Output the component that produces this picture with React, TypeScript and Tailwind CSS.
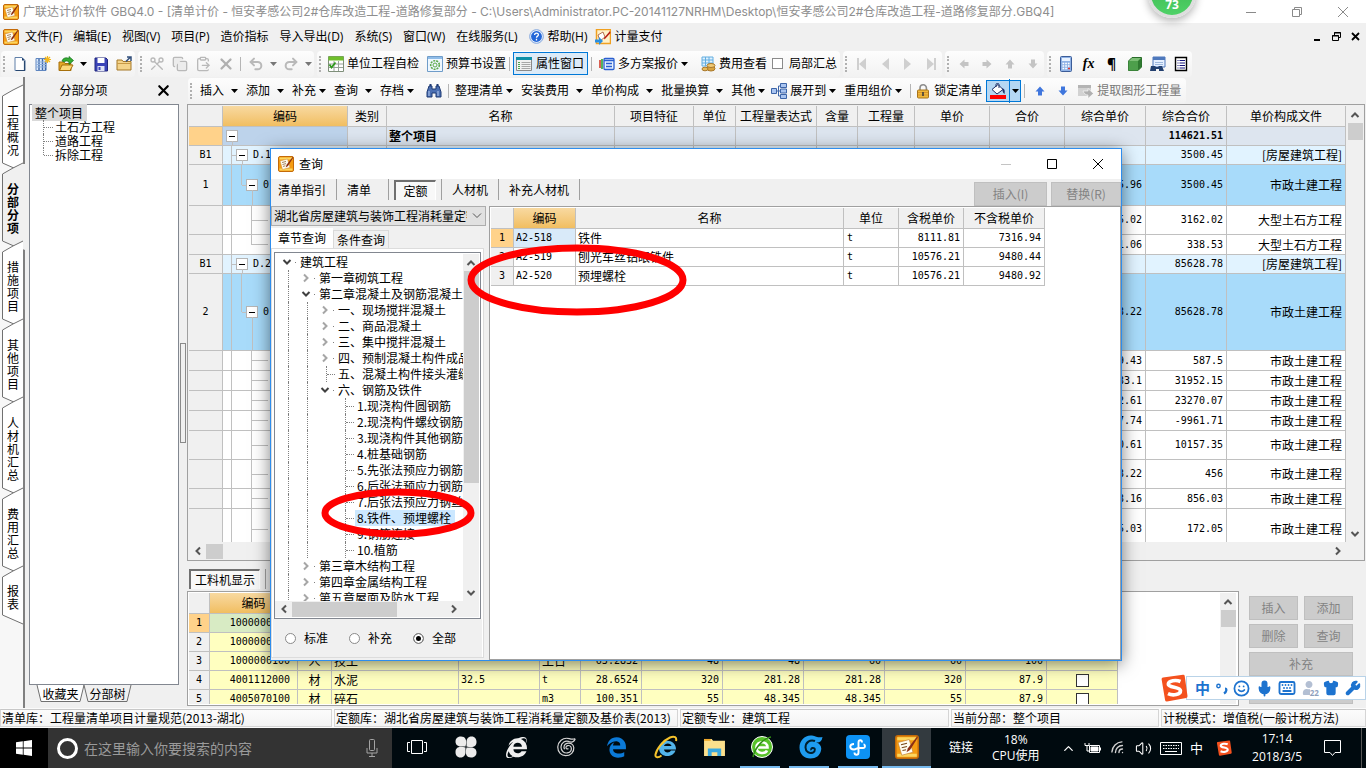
import { type ReactNode } from 'react';
import clsx from 'clsx';
import {
    ChevronUp, ClipboardPaste, Copy, Keyboard, Mic, Scissors, Shirt, Smile, Undo2, Redo2, Volume2, Wifi, Wrench, X,
} from 'lucide-react';
import { FaEdgeLegacy, FaInternetExplorer, FaUser } from 'react-icons/fa';

const UI_FONT = "font-['Open_Sans','Noto_Sans_CJK_SC',sans-serif]";
const TITLE_FONT = "font-['Inter','Noto_Sans_CJK_SC',sans-serif]";
const GRID_FONT = "font-['Noto_Sans_CJK_SC',sans-serif]";
const NUM_FONT = "font-['DejaVu_Sans_Mono',monospace] text-[10px]";

/* ---------- small drawings ---------- */

function AppIcon({ className = 'size-4' }: { className?: string }) {
    return (
        <svg viewBox="0 0 16 16" className={clsx('shrink-0', className)}>
            <rect x="0.5" y="0.5" width="15" height="15" rx="1.500" fill="#f59c12" stroke="#c46a08" />
            <path d="M1.500 1.500h13v2h-13zM1.500 12.500h13v2h-13z" fill="#fcd660" />
            <path d="M2 5 9.500 3l2.500 8.500L4.500 13.500z" fill="#fffdf2" stroke="#c98a3a" strokeWidth="0.500" />
            <path d="m4 6.500 4-1M4.500 8.500l3.500-.9M5 10.400l2.400-.6" stroke="#7a4a1c" strokeWidth="0.700" />
            <path d="m14.800.8-6.200 8-.9 2.700 2.300-1.500 5.200-8.200z" fill="#8c2f14" />
        </svg>
    );
}

function Caret({ className }: { className?: string }) {
    return (
        <svg viewBox="0 0 7 4" className={clsx('h-1 w-[7px] shrink-0', className)}>
            <path d="M0 0h7L3.500 4z" fill="currentColor" />
        </svg>
    );
}

function Arrow({ dir, className }: { dir: 'up' | 'down' | 'left' | 'right'; className?: string }) {
    const turn = { up: 0, right: 90, down: 180, left: 270 }[dir];
    return (
        <svg viewBox="0 0 10 10" className={clsx('size-[10px] shrink-0', className)}>
            <path d="M0.500 5.500 5 .5l4.500 5H7v4H3v-4z" fill="currentColor" transform={`rotate(${turn} 5 5)`} />
        </svg>
    );
}

function Chev({ dir, className = 'text-[#555]' }: { dir: 'up' | 'down' | 'left' | 'right'; className?: string }) {
    const turn = { up: 0, right: 90, down: 180, left: 270 }[dir];
    return (
        <svg viewBox="0 0 10 10" className={clsx('size-[10px] shrink-0', className)}>
            <path d="M1.500 7 5 3.500 8.500 7" fill="none" stroke="currentColor" strokeWidth="2" transform={`rotate(${turn} 5 5)`} />
        </svg>
    );
}

function Svg16({ children }: { children: ReactNode }) {
    return <svg viewBox="0 0 16 16" className="size-4 shrink-0" fill="none">{children}</svg>;
}

const NewDoc = () => (
    <Svg16>
        <path d="M3 1.500h7l3 3v10H3z" fill="#fff" stroke="#5f7fa8" />
        <path d="M10 1.500v3h3z" fill="#1f3f6e" />
        <path d="M12.500 5v9.500H4" stroke="#28476f" strokeWidth="1.200" />
    </Svg16>
);
const NewProject = () => (
    <Svg16>
        <path d="M1 2.500h10v12H1z" fill="#dce9fa" stroke="#5f86c0" />
        <path d="M4 3v11M7.500 3v11M10.500 6v8" stroke="#3e68a8" strokeWidth="1.400" />
        <path d="M1 6h10M1 8.500h10M1 11h10" stroke="#8fb0dd" />
        <path d="M12.500 0v7M9 3.500h7M10 1l5 5M15 1l-5 5" stroke="#f2b61a" strokeWidth="1.200" />
    </Svg16>
);
const OpenFile = () => (
    <Svg16>
        <path d="M1 6h5l1 1.500h6v7H1z" fill="#e3a926" stroke="#a66f0a" />
        <path d="M1.500 14.500 4 9h11l-3 5.500z" fill="#fbd878" stroke="#a66f0a" />
        <path d="M4 5C5 2 8 1 11 2.500V.5l4.500 4-4.500 4V6C9 4.500 7 4.500 6.500 6z" fill="#35ad34" stroke="#12701a" strokeWidth="0.700" />
    </Svg16>
);
const Save = () => (
    <Svg16>
        <path d="M2 2h11l1.500 1.500V15H2z" fill="#3b44b8" stroke="#20267c" />
        <path d="M4.500 2h7v5h-7z" fill="#fff" />
        <path d="M4.500 10h7v5h-7z" fill="#dfe3f5" />
        <path d="M5.500 11h2v3h-2z" fill="#3b44b8" />
    </Svg16>
);
const FolderUp = () => (
    <Svg16>
        <path d="M1 4h5l1 1.500h8V14H1z" fill="#f4d48b" stroke="#a57828" />
        <path d="M1 7.500h14" stroke="#c89a46" />
        <path d="M10 5.500 14 1.500M11 1h4v4" stroke="#33507c" strokeWidth="1.500" />
    </Svg16>
);
const CheckTable = () => (
    <Svg16>
        <path d="M.5.5h15v15H.5z" fill="#fff" stroke="#7f8f7a" />
        <path d="M.5.5h15v4H.5z" fill="#6fbf2b" />
        <path d="M1 8h14M1 11.500h14M6 5v10M10.500 5v10" stroke="#98a398" />
        <path d="m1.500 8.500 2 3 4-5" stroke="#2f9a1c" strokeWidth="1.800" />
    </Svg16>
);
const GearBook = () => (
    <Svg16>
        <path d="M.5.5h15v15H.5z" fill="#eef7ff" stroke="#6f9cc9" />
        <path d="M1 1h14v2H1z" fill="#8fbce8" />
        <circle cx="8" cy="9" r="4.300" stroke="#5fa94b" strokeWidth="1.600" strokeDasharray="2 1" />
        <circle cx="8" cy="9" r="2" stroke="#5fa94b" />
    </Svg16>
);
const PropWindow = () => (
    <Svg16>
        <path d="M.5 1.500h15v13H.5z" fill="#f2f2f2" stroke="#8a8a8a" />
        <path d="M0 1h16v3H0z" fill="#0d8fa8" />
        <path d="M2 6.500h2M2 8.500h2M2 10.500h2M2 12.500h2" stroke="#4aa84a" />
        <path d="M5.500 6.500h9M5.500 8.500h9M5.500 10.500h9M5.500 12.500h9" stroke="#a8a8a8" />
    </Svg16>
);
const MultiPlan = () => (
    <Svg16>
        <path d="M1 4v8" stroke="#d33a2a" strokeWidth="1.600" />
        <path d="M3 3v10" stroke="#2ba336" strokeWidth="1.600" />
        <rect x="5" y="2.500" width="10" height="11" rx="1" fill="#e9f1ff" stroke="#2a5fd0" strokeWidth="1.300" />
        <path d="M5 4.500h10M7 7.500h6M7 10.500h6" stroke="#2a5fd0" strokeWidth="1.300" />
    </Svg16>
);
const FeeView = () => (
    <Svg16>
        <path d="M2 1h11v9H2z" fill="#dff1ff" />
        <path d="M2 1h11v9H2zM2 4h11M2 7h11M5.500 1v9M9 1v9" stroke="#63aee0" />
        <ellipse cx="11" cy="12.500" rx="4" ry="2.500" fill="#d9a441" stroke="#a9782a" />
        <ellipse cx="11" cy="9.500" rx="4" ry="2" fill="#f0cb78" stroke="#a9782a" />
        <ellipse cx="5" cy="13" rx="3" ry="1.800" fill="#e7bb5c" stroke="#a9782a" />
    </Svg16>
);
const Binoculars = () => (
    <Svg16>
        <path d="M3 3h3v3h4V3h3l2 6v5h-5v-4H6v4H1V9z" fill="#4b6fb2" stroke="#1f3a73" />
        <path d="M3.500 1h2v2h-2zM10.500 1h2v2h-2z" fill="#1f3a73" />
        <path d="M3 8v5M12 8v5" stroke="#b9cdf0" />
    </Svg16>
);
const Expand = () => (
    <Svg16>
        <path d="M.5 5.500h5v5h-5zM9.500 .5h6v4h-6zM9.500 6h6v4h-6zM9.500 11.500h6v4h-6z" fill="#a9c4f0" stroke="#3c64a8" />
        <path d="M6 8h3M7.500 3v10M7.500 3h2M7.500 13h2" stroke="#3c64a8" />
    </Svg16>
);
const LockIcon = () => (
    <Svg16>
        <path d="M5 8V5a3.200 3.200 0 0 1 6.400 0v3" stroke="#8d8d8d" strokeWidth="1.600" />
        <rect x="2.500" y="7" width="11" height="8" rx="1" fill="#f0b93a" stroke="#a8741a" />
        <path d="M3 9.500h10M3 12h10" stroke="#d8942a" />
        <path d="M8 9v4" stroke="#3d3d3d" strokeWidth="1.600" />
    </Svg16>
);
const PaintBucket = () => (
    <Svg16>
        <path d="m2 6.500 6-5 5 5-6 4.500z" fill="#fff" stroke="#1c2f66" />
        <path d="M6 4V1.500C6 0 9 0 9 1.500V5" stroke="#1c2f66" />
        <path d="M12 5c3 1 3 3 2.500 6C12 9 13 7 12 5z" fill="#1c2f66" />
        <path d="M0 12h16v4H0z" fill="#f00" />
    </Svg16>
);
const Extract = () => (
    <Svg16>
        <path d="M0 2h13v11H0z" fill="#d2d2d2" />
        <path d="M0 2h13v3H0z" fill="#b4b4b4" />
        <path d="M5 8h5V5.500l5.500 5-5.500 5V12C8 12 6 11 5 8z" fill="#b0b0b0" stroke="#fff" strokeWidth="0.600" />
    </Svg16>
);
const Calc = () => (
    <Svg16>
        <rect x="2.500" y="0.500" width="11" height="15" rx="1" fill="#8fb2e6" stroke="#3b5c98" />
        <path d="M4 2h8v3H4z" fill="#e8f2ff" />
        <path d="M4.500 7.500h7M4.500 10h7M4.500 12.500h7" stroke="#fff" strokeWidth="1.500" strokeDasharray="1.700 1" />
        <path d="M10 12.500h2" stroke="#d33" strokeWidth="1.500" />
    </Svg16>
);
const Cube = () => (
    <Svg16>
        <path d="M1.500 5 5 1.500h9.500V11L11 14.500H1.500z" fill="#7cbf75" stroke="#2a6b2a" />
        <path d="M1.500 5H11v9.500H1.500z" fill="#4d9f4b" />
        <path d="M11 5v9.500l3.500-3.500V1.500z" fill="#2f7a30" />
    </Svg16>
);
const FindTable = () => (
    <Svg16>
        <path d="M3 1h12v10H3z" fill="#e6f0ff" stroke="#4f79bd" />
        <path d="M3 1h12v3H3z" fill="#4f79bd" />
        <path d="M5 6.500h8M5 8.500h8" stroke="#9db8dd" />
        <path d="M1 10h4l1 1h2l1-1h3l2 5H9v-2H6v2H0z" fill="#23406f" />
    </Svg16>
);
const ListBox = () => (
    <Svg16>
        <path d="M2.500 1.500h11v13h-11z" fill="#fff" stroke="#000" strokeWidth="1.400" />
        <path d="M4.500 4.500h1M4.500 7h1M4.500 9.500h1M4.500 12h1M6.500 4.500h5.500M6.500 7h5.500M6.500 9.500h5.500M6.500 12h5.500" stroke="#14147a" />
    </Svg16>
);

function Sogou({ className }: { className?: string }) {
    return (
        <svg viewBox="0 0 28 28" className={clsx('shrink-0', className)}>
            <path d="M3 3.500 23 .8q1.500-.2 1.700 1.300L27.500 22q.2 1.500-1.300 1.900L7 27.600q-1.500.2-1.900-1.300L1.600 5.300Q1.500 3.800 3 3.500z" fill="#f4511e" />
            <path d="M20.500 7.500C16 5.500 8.500 6.500 8.300 10c-.2 4 11.900 2.500 12.200 6.700.2 4-7.500 5.300-12.500 3" fill="none" stroke="#fff" strokeWidth="3.600" />
        </svg>
    );
}

/* ---------- toolbars ---------- */

function Band({ children }: { children: ReactNode }) {
    return (
        <div className="mr-[3px] flex h-[26px] items-center rounded-sm bg-linear-to-b from-[#fdfdfd] to-[#f2f2f2]">
            <span className="mx-[2px] h-4 w-[3px] shrink-0 border-l-2 border-dotted border-[#b0b0b0]" />
            {children}
        </div>
    );
}

function ToolButton({ label, children, className }: { label: string; children: ReactNode; className?: string }) {
    return (
        <button type="button" aria-label={label} className={clsx('flex h-6 w-[23px] shrink-0 items-center justify-center', className)}>
            {children}
        </button>
    );
}

function TextButton({ icon, label, caret }: { icon?: ReactNode; label: string; caret?: 'tight' | 'loose' }) {
    return (
        <button type="button" className="flex h-6 shrink-0 items-center whitespace-nowrap">
            {icon && <span className="flex w-[23px] shrink-0 justify-center">{icon}</span>}
            {label}
            {caret === 'tight' && <span className="w-[18px] pl-[3px]"><Caret /></span>}
            {caret === 'loose' && <span className="w-[22px] pl-[7px]"><Caret /></span>}
        </button>
    );
}

function Sep({ tight }: { tight?: boolean }) {
    return <span className={clsx('h-[14px] w-px shrink-0 bg-[#b5b5b5]', !tight && 'mx-[3px]')} />;
}

function TitleBar() {
    return (
        <header className="flex h-[23px] shrink-0 items-center bg-white pl-[3px] text-[#8e8e8e]">
            <AppIcon />
            <h1 className={clsx('ml-1 flex-1 truncate text-xs leading-5', TITLE_FONT)}>
                广联达计价软件 GBQ4.0 - [清单计价 - 恒安孝感公司2#仓库改造工程-道路修复部分 - C:\Users\Administrator.PC-20141127NRHM\Desktop\恒安孝感公司2#仓库改造工程-道路修复部分.GBQ4]
            </h1>
            <WindowControls className="text-[#8a8a8a]" restore />
        </header>
    );
}

function WindowControls({ className, restore }: { className?: string; restore?: boolean }) {
    return (
        <div className={clsx('flex', className)}>
            <button type="button" aria-label="最小化" className={clsx('flex w-[46px] justify-center', !restore && 'text-[#c4c4c4]')}>
                <svg viewBox="0 0 10 10" className="size-[10px]"><path d="M0 5.500h10" stroke="currentColor" /></svg>
            </button>
            <button type="button" aria-label="最大化" className="flex w-[46px] justify-center">
                <svg viewBox="0 0 10 10" className="size-[10px]" fill="none" stroke="currentColor">
                    {restore ? <path d="M.5 2.500h7v7h-7zM2.500 2.500v-2h7v7h-2" /> : <path d="M.5.5h9v9h-9z" />}
                </svg>
            </button>
            <button type="button" aria-label="关闭" className="flex w-[46px] justify-center">
                <svg viewBox="0 0 10 10" className="size-[10px]"><path d="m0 0 10 10M10 0 0 10" stroke="currentColor" /></svg>
            </button>
        </div>
    );
}

const menus = ['文件(F)', '编辑(E)', '视图(V)', '项目(P)', '造价指标', '导入导出(D)', '系统(S)', '窗口(W)', '在线服务(L)'];

function MenuBar() {
    return (
        <nav className="flex h-[27px] shrink-0 items-center pl-[3px]">
            <AppIcon />
            <div className="ml-[6px] flex flex-1 items-center gap-[11px]">
                {menus.map((m) => <button key={m} type="button" className="whitespace-nowrap">{m}</button>)}
                <button type="button" className="flex items-center gap-1">
                    <svg viewBox="0 0 16 16" className="size-[15px]">
                        <circle cx="8" cy="8" r="7.300" fill="#e8f0fc" stroke="#7aa0dc" />
                        <circle cx="8" cy="8" r="5.800" fill="#2367d8" />
                        <path d="M6 6.500c0-3 4-2.700 4-.4 0 1.500-2 1.500-2 3.200M8 10.500v1.700" fill="none" stroke="#fff" strokeWidth="1.400" />
                    </svg>
                    帮助(H)
                </button>
                <button type="button" className="-ml-1 flex items-center gap-1">
                    <svg viewBox="0 0 16 16" className="size-4">
                        <path d="M1.500.5h14v14h-14z" fill="#fff1c9" stroke="#f0a020" strokeWidth="1.500" />
                        <path d="m3 6 5-3 2 5-5 4z" fill="#fff" stroke="#a0522d" strokeWidth="0.800" />
                        <path d="m15 2-6 7 .5 1.500 6-6.500z" fill="#b81d14" />
                        <path d="M0 10.500h4V8l4 4-4 4v-2.500H0z" fill="#2a8fe0" />
                    </svg>
                    计量支付
                </button>
            </div>
            <div className="flex items-center gap-[10px] pr-[6px] text-black">
                <svg viewBox="0 0 9 9" className="size-[9px]"><path d="M1 7h6v2H1z" /></svg>
                <svg viewBox="0 0 9 9" className="size-[9px]" fill="none" stroke="currentColor"><path d="M.5 3.500h6v5h-6zM0 4h7M2.500 3V.5h6v5H7M2 1h7" /></svg>
                <svg viewBox="0 0 9 9" className="size-[9px]"><path d="m1 1 7 7M8 1 1 8" stroke="currentColor" strokeWidth="1.800" /></svg>
            </div>
        </nav>
    );
}

function NavTriangle({ flip, bar }: { flip?: boolean; bar?: boolean }) {
    return (
        <svg viewBox="0 0 10 12" className={clsx('h-3 w-[10px] text-[#cfcfcf]', flip && 'rotate-180')}>
            <path d="M9 0v12L2 6z" fill="currentColor" />
            {bar && <path d="M0 0h2v12H0z" fill="currentColor" />}
        </svg>
    );
}

function MainToolbar() {
    const grey = 'size-4 text-[#b9b9b9]';
    return (
        <div className="flex h-[27px] shrink-0 items-center overflow-hidden pl-[1px]">
            <Band>
                <ToolButton label="新建"><NewDoc /></ToolButton>
                <ToolButton label="新建项目"><NewProject /></ToolButton>
                <ToolButton label="打开"><OpenFile /></ToolButton>
                <ToolButton label="最近文件" className="max-w-3"><Caret /></ToolButton>
                <ToolButton label="保存"><Save /></ToolButton>
                <ToolButton label="导出"><FolderUp /></ToolButton>
            </Band>
            <Band>
                <ToolButton label="剪切"><Scissors className={clsx(grey, 'rotate-90')} /></ToolButton>
                <ToolButton label="复制"><Copy className={clsx(grey, 'fill-[#ececec]')} /></ToolButton>
                <ToolButton label="粘贴"><ClipboardPaste className={grey} /></ToolButton>
                <ToolButton label="删除"><X className="size-[18px] text-[#b0b0b0]" strokeWidth={3} /></ToolButton>
                <Sep />
                <ToolButton label="撤销"><Undo2 className={grey} strokeWidth={3} /></ToolButton>
                <span className="flex w-3 justify-center text-[#777]"><Caret /></span>
                <ToolButton label="恢复"><Redo2 className={grey} strokeWidth={3} /></ToolButton>
                <span className="flex w-3 justify-center text-[#777]"><Caret /></span>
            </Band>
            <Band>
                <TextButton icon={<CheckTable />} label="单位工程自检" />
                <span className="w-[4px]" />
                <TextButton icon={<GearBook />} label="预算书设置" />
                <Sep />
                <button type="button" className="flex h-[23px] w-[75px] shrink-0 items-center gap-1 border border-[#0078d7] bg-[#dcebf8] pl-[2px] whitespace-nowrap">
                    <PropWindow />
                    属性窗口
                </button>
                <Sep />
                <TextButton icon={<MultiPlan />} label="多方案报价" caret="tight" />
                <TextButton icon={<FeeView />} label="费用查看" />
                <label className="flex items-center gap-[6px] pr-[3px] pl-[5px] whitespace-nowrap">
                    <input type="checkbox" className="size-[11px] appearance-none border border-[#8a8a8a] bg-white" />
                    局部汇总
                </label>
            </Band>
            <Band>
                <ToolButton label="首条"><NavTriangle bar /></ToolButton>
                <ToolButton label="上一条"><NavTriangle /></ToolButton>
                <ToolButton label="下一条"><NavTriangle flip /></ToolButton>
                <ToolButton label="末条"><NavTriangle flip bar /></ToolButton>
            </Band>
            <Band>
                <ToolButton label="左移"><Arrow dir="left" className="text-[#c4c4c4]" /></ToolButton>
                <ToolButton label="右移"><Arrow dir="right" className="text-[#c4c4c4]" /></ToolButton>
                <ToolButton label="上移"><Arrow dir="up" className="text-[#c4c4c4]" /></ToolButton>
                <ToolButton label="下移"><Arrow dir="down" className="text-[#c4c4c4]" /></ToolButton>
            </Band>
            <Band>
                <ToolButton label="计算器"><Calc /></ToolButton>
                <ToolButton label="函数"><span className="font-['Liberation_Serif',serif] text-sm font-bold italic">fx</span></ToolButton>
                <ToolButton label="特殊符号"><span className="text-sm font-bold">¶</span></ToolButton>
                <ToolButton label="图元"><Cube /></ToolButton>
                <ToolButton label="查找"><FindTable /></ToolButton>
                <ToolButton label="列表"><ListBox /></ToolButton>
            </Band>
        </div>
    );
}

function EditToolbar() {
    return (
        <div className="flex h-[27px] shrink-0 items-center overflow-hidden pl-[1px]">
            <Band>
                <span className="w-[5px]" />
                <TextButton label="插入" caret="loose" />
                <TextButton label="添加" caret="loose" />
                <TextButton label="补充" caret="tight" />
                <TextButton label="查询" caret="loose" />
                <TextButton label="存档" caret="tight" />
                <ToolButton label="查找"><Binoculars /></ToolButton>
                <Sep />
                <span className="w-[3px]" />
                <TextButton label="整理清单" caret="tight" />
                <TextButton label="安装费用" caret="loose" />
                <TextButton label="单价构成" caret="loose" />
                <TextButton label="批量换算" caret="loose" />
                <TextButton label="其他" caret="tight" />
                <span className="-ml-[6px]"><TextButton icon={<Expand />} label="展开到" caret="tight" /></span>
                <TextButton label="重用组价" caret="tight" />
                <Sep tight />
                <TextButton icon={<LockIcon />} label="锁定清单" />
                <span className="ml-[4px] flex h-[22px] w-[35px] items-center border border-[#0078d7] bg-[#b5d7f3]">
                    <ToolButton label="填充颜色" className="border-r border-[#0078d7]"><PaintBucket /></ToolButton>
                    <button type="button" aria-label="选择颜色" className="flex flex-1 justify-center"><Caret /></button>
                </span>
                <Sep />
                <ToolButton label="上移"><Arrow dir="up" className="text-[#3f76dd]" /></ToolButton>
                <ToolButton label="下移"><Arrow dir="down" className="text-[#3f76dd]" /></ToolButton>
                <span className="pr-[5px] text-[#777]"><TextButton icon={<Extract />} label="提取图形工程量" /></span>
            </Band>
        </div>
    );
}

/* ---------- left side ---------- */

const sideTabs = [
    { label: '工程概况', h: 78 },
    { label: '分部分项', h: 78, active: true },
    { label: '措施项目', h: 78 },
    { label: '其他项目', h: 78 },
    { label: '人材机汇总', h: 91 },
    { label: '费用汇总', h: 78 },
    { label: '报表', h: 49 },
];

function SideTabs() {
    return (
        <div className="flex w-[25px] shrink-0 flex-col border-r-2 border-[#808080] bg-[#f7f7f7] pt-[13px]">
            {sideTabs.map((t) => (
                <button
                    key={t.label}
                    type="button"
                    className={clsx('relative flex shrink-0 items-center pt-[2px] pl-[7px]', t.active && '-mr-[2px] font-bold')}
                    style={{ height: t.h }}
                >
                    <svg viewBox={`0 0 23 ${t.h}`} className="absolute top-0 left-0 w-[23px] overflow-visible" style={{ height: t.h }}>
                        <path
                            d={`M23 -4 L13 0 L2.500 6 V${t.h - 5} L${t.active ? 25 : 23} ${t.h + 4} V-4`}
                            fill={t.active ? '#f0f0f0' : '#fff'}
                        />
                        <path d={`M23 -5 L13 0 L2.500 6 V${t.h - 5} L23 ${t.h + 4}`} fill="none" stroke="#707070" />
                    </svg>
                    <span className={clsx('relative w-3 text-xs leading-[13px] break-all', GRID_FONT)}>{t.label}</span>
                </button>
            ))}
        </div>
    );
}

function SectionPanel() {
    return (
        <aside className="flex w-[155px] shrink-0 flex-col pl-1">
            <div className="flex h-[27px] items-center">
                <h2 className="flex-1 pl-[15px] text-center">分部分项</h2>
                <button type="button" aria-label="关闭" className="mr-2 ml-8"><X className="size-[17px]" strokeWidth={3} /></button>
            </div>
            <div className={clsx('mr-px flex-1 border border-[#828790] bg-white pt-px pl-[2px] text-xs leading-[14px]', GRID_FONT)}>
                <span className="bg-[#d9d9d9] pr-1 pl-[3px]">整个项目</span>
                <ul className="pl-[11px]">
                    {['土石方工程', '道路工程', '拆除工程'].map((s, i) => (
                        <li key={s} className="flex h-[14px]">
                            <span className={clsx('w-px border-l border-dotted border-[#808080]', i === 2 ? 'h-[7px]' : 'h-[14px]')} />
                            <span className="mt-[7px] w-[9px] border-t border-dotted border-[#808080]" />
                            <span className="pl-[2px] whitespace-nowrap">{s}</span>
                        </li>
                    ))}
                </ul>
            </div>
            <div className={clsx('flex h-[23px] items-start pl-[8px] text-xs', GRID_FONT)}>
                {['收藏夹', '分部树'].map((t, i) => (
                    <button key={t} type="button" className="relative flex h-[17px] w-[47px] items-center justify-center whitespace-nowrap">
                        <svg viewBox="0 0 47 17" className="absolute inset-0 h-[17px] w-[47px] overflow-visible">
                            <path d="M0 0 4 16.500H43L47 0" fill={i ? '#f0f0f0' : '#fff'} stroke="#707070" />
                        </svg>
                        <span className="relative">{t}</span>
                    </button>
                ))}
            </div>
        </aside>
    );
}

function ScrollV({ thumb, className }: { thumb: string; className?: string }) {
    return (
        <div className={clsx('flex w-[16px] shrink-0 flex-col items-center bg-[#f0f0f0]', className)}>
            <span className="flex h-[17px] items-center"><Chev dir="up" /></span>
            <span className={clsx('w-[15px] bg-[#cdcdcd]', thumb)} />
            <span className="flex-1" />
            <span className="flex h-[17px] items-center"><Chev dir="down" /></span>
        </div>
    );
}

function ScrollH({ thumb, className }: { thumb: string; className?: string }) {
    return (
        <div className={clsx('flex h-[16px] shrink-0 items-center bg-[#f0f0f0]', className)}>
            <span className="flex w-[17px] justify-center"><Chev dir="left" /></span>
            <span className={clsx('h-[15px] bg-[#cdcdcd]', thumb)} />
            <span className="flex-1" />
            <span className="flex w-[17px] justify-center"><Chev dir="right" /></span>
        </div>
    );
}

/* ---------- main grid ---------- */

const CELL = 'border-r border-b border-[#c0c0c0] p-0 whitespace-nowrap overflow-hidden';
const HEAD = 'border-r border-b border-[#c0c0c0] p-0 font-normal whitespace-nowrap overflow-hidden bg-[#f0f0f0]';
const CODE_HEAD = 'border-r border-b border-[#c0c0c0] p-0 font-normal bg-linear-to-b from-[#f8d9a0] to-[#f1be60]';

type RowKind = 'root' | 'group' | 'item' | 'leaf' | 'last';

interface QuotaRow {
    kind: RowKind;
    height: string;
    no?: string;
    code?: string;
    price?: string;
    total: string;
    file?: string;
}

const quotaRows: QuotaRow[] = [
    { kind: 'root', height: 'h-[19px]', total: '114621.51' },
    { kind: 'group', height: 'h-[19px]', no: 'B1', code: 'D.1', total: '3500.45', file: '[房屋建筑工程]' },
    { kind: 'item', height: 'h-[41px]', no: '1', code: '0', price: '5.96', total: '3500.45', file: '市政土建工程' },
    { kind: 'leaf', height: 'h-[29px]', price: '5.02', total: '3162.02', file: '大型土石方工程' },
    { kind: 'last', height: 'h-[20px]', price: '1.06', total: '338.53', file: '大型土石方工程' },
    { kind: 'group', height: 'h-[19px]', no: 'B1', code: 'D.2', total: '85628.78', file: '[房屋建筑工程]' },
    { kind: 'item', height: 'h-[77px]', no: '2', code: '0', price: '3.22', total: '85628.78', file: '市政土建工程' },
    { kind: 'leaf', height: 'h-[20px]', price: '9.43', total: '587.5', file: '市政土建工程' },
    { kind: 'leaf', height: 'h-[20px]', price: '33.1', total: '31952.15', file: '市政土建工程' },
    { kind: 'leaf', height: 'h-[20px]', price: '2.61', total: '23270.07', file: '市政土建工程' },
    { kind: 'leaf', height: 'h-[20px]', price: '7.74', total: '-9961.71', file: '市政土建工程' },
    { kind: 'leaf', height: 'h-[29px]', price: '0.61', total: '10157.35', file: '市政土建工程' },
    { kind: 'leaf', height: 'h-[29px]', price: '3.22', total: '456', file: '市政土建工程' },
    { kind: 'leaf', height: 'h-[20px]', price: '3.16', total: '856.03', file: '市政土建工程' },
    { kind: 'leaf', height: 'h-[41px]', price: '5.03', total: '172.05', file: '市政土建工程' },
];

const rowBg: Record<RowKind, string> = {
    root: 'bg-[#dde5ef]',
    group: 'bg-[#e1f3ff]',
    item: 'bg-[#a8dbfa]',
    leaf: 'bg-white',
    last: 'bg-white',
};

function Toggle({ tail }: { tail?: boolean }) {
    return (
        <span
            className={clsx(
                'relative flex size-3 shrink-0 items-center justify-center self-center border border-[#b5b5b5] bg-white',
                tail && 'after:absolute after:top-full after:left-[5px] after:h-10 after:w-px after:bg-[#c0c0c0]',
            )}
        >
            <span className="h-px w-[6px] bg-black" />
        </span>
    );
}

function CodeCell({ row }: { row: QuotaRow }) {
    const line = 'shrink-0 border-[#c0c0c0]';
    return (
        <div className="flex h-full overflow-hidden">
            {row.kind === 'root' && <span className="flex pl-[3px]"><Toggle tail /></span>}
            {row.kind !== 'root' && <span className={clsx(line, 'w-[9px] border-r')} />}
            {row.kind === 'group' && (
                <>
                    <span className={clsx(line, 'w-1 self-center border-t')} />
                    <Toggle tail />
                </>
            )}
            {row.kind === 'item' && (
                <>
                    <span className={clsx(line, 'h-1/2 w-[10px] border-r')} />
                    <span className={clsx(line, 'w-1 self-center border-t')} />
                    <Toggle tail />
                </>
            )}
            {(row.kind === 'leaf' || row.kind === 'last') && (
                <>
                    <span className={clsx(line, 'w-5 border-r', row.kind === 'last' && 'h-1/2')} />
                    <span className={clsx(line, 'w-4 self-center border-t')} />
                </>
            )}
            {row.code && <span className={clsx('self-center pl-[5px]', NUM_FONT)}>{row.code}</span>}
        </div>
    );
}

function QuotaGrid() {
    const heads = ['类别', '名称', '项目特征', '单位', '工程量表达式', '含量', '工程量', '单价', '合价', '综合单价', '综合合价', '单价构成文件'];
    return (
        <div className="flex min-h-0 flex-1 flex-col border border-[#a0a0a0] bg-[#f0f0f0] p-px">
            <div className="flex min-h-0 flex-1">
                <div className="min-w-0 flex-1 overflow-hidden">
                    <table className={clsx('w-full table-fixed border-separate border-spacing-0 text-xs leading-4', GRID_FONT)}>
                        <colgroup>
                            <col className="w-[34px]" />
                            <col className="w-[125px]" />
                            <col className="w-[39px]" />
                            <col />
                            <col className="w-[79px]" />
                            <col className="w-[42px]" />
                            <col className="w-[81px]" />
                            <col className="w-[41px]" />
                            <col className="w-[57px]" />
                            <col className="w-[75px]" />
                            <col className="w-[75px]" />
                            <col className="w-[81px]" />
                            <col className="w-[81px]" />
                            <col className="w-[119px]" />
                        </colgroup>
                        <thead>
                            <tr className="h-[21px]">
                                <th className={HEAD} />
                                <th className={CODE_HEAD}>编码</th>
                                {heads.map((h) => <th key={h} className={HEAD}>{h}</th>)}
                            </tr>
                        </thead>
                        <tbody>
                            {quotaRows.map((r, i) => {
                                const root = r.kind === 'root';
                                return (
                                    <tr key={i} className={clsx(r.height, rowBg[r.kind])}>
                                        <th className={clsx(CELL, 'text-center font-normal', NUM_FONT, root ? 'bg-[#ffd28a]' : 'bg-[#f0f0f0]')}>{r.no}</th>
                                        <td className={clsx(CELL, r.height, root && 'bg-[#bdd3eb]')}><CodeCell row={r} /></td>
                                        <td className={CELL} />
                                        <td className={clsx(CELL, 'pl-[2px] font-bold')}>{root && '整个项目'}</td>
                                        {heads.slice(2, 9).map((h) => <td key={h} className={CELL} />)}
                                        <td className={clsx(CELL, NUM_FONT, 'pr-[3px] text-right')}>{r.price}</td>
                                        <td className={clsx(CELL, NUM_FONT, 'pr-[3px] text-right', root && 'font-bold')}>{r.total}</td>
                                        <td className={clsx(CELL, 'pr-[3px] text-right')}>{r.file}</td>
                                    </tr>
                                );
                            })}
                        </tbody>
                    </table>
                </div>
                <ScrollV thumb="h-[17px]" className="ml-px" />
            </div>
            <ScrollH thumb="w-[17px]" className="mt-px pr-[17px]" />
        </div>
    );
}

/* ---------- labour / material grid ---------- */

const materialRows = [
    ['1', '1000000100', '', '', '', '', '', '', '', '', '', ''],
    ['2', '1000000100', '', '', '', '', '', '', '', '', '', ''],
    ['3', '1000000100', '人', '技工', '', '工日', '63.2832', '48', '48', '60', '60', '100'],
    ['4', '4001112000', '材', '水泥', '32.5', 't', '28.6524', '320', '281.28', '281.28', '320', '87.9'],
    ['5', '4005070100', '材', '碎石', '', 'm3', '100.351', '55', '48.345', '48.345', '55', '87.9'],
];

function MaterialGrid() {
    return (
        <div className="flex w-[1052px] min-w-0 shrink border border-[#a0a0a0] bg-white p-px">
            <div className="min-w-0 flex-1 overflow-hidden">
                <table className={clsx('w-[929px] table-fixed border-separate border-spacing-0 text-xs leading-4', GRID_FONT)}>
                    <colgroup>
                        <col className="w-[21px]" />
                        <col className="w-[88px]" />
                        <col className="w-[34px]" />
                        <col className="w-[127px]" />
                        <col className="w-[81px]" />
                        <col className="w-[41px]" />
                        <col className="w-[61px]" />
                        <col className="w-[81px]" />
                        <col className="w-[81px]" />
                        <col className="w-[81px]" />
                        <col className="w-[81px]" />
                        <col className="w-[81px]" />
                        <col className="w-[71px]" />
                    </colgroup>
                    <thead>
                        <tr className="h-[21px]">
                            <th className={HEAD} />
                            <th className={CODE_HEAD}>编码</th>
                            {Array.from({ length: 11 }, (_, i) => <td key={i} className={HEAD} />)}
                        </tr>
                    </thead>
                    <tbody>
                        {materialRows.map((r, i) => (
                            <tr key={r[0]} className="h-[19px] bg-[#ffffc0]">
                                <th className={clsx(CELL, 'text-center font-normal', NUM_FONT, i === 0 ? 'bg-[#ffd28a]' : 'bg-[#f0f0f0]')}>{r[0]}</th>
                                <td className={clsx(CELL, NUM_FONT, 'pr-[7px] text-right', i === 0 && 'bg-[#d8ebc4]')}>{r[1]}</td>
                                <td className={clsx(CELL, 'text-center')}>{r[2]}</td>
                                <td className={clsx(CELL, 'pl-[2px]')}>{r[3]}</td>
                                <td className={clsx(CELL, NUM_FONT, 'pl-[2px]')}>{r[4]}</td>
                                <td className={clsx(CELL, r[2] === '材' && NUM_FONT, 'pl-[2px]')}>{r[5]}</td>
                                {r.slice(6).map((v, k) => <td key={k} className={clsx(CELL, NUM_FONT, 'pr-[3px] text-right')}>{v}</td>)}
                                <td className={CELL}>
                                    {r[2] === '材' && (
                                        <div className="flex justify-center">
                                            <input type="checkbox" aria-label="暂估" className="size-[13px] appearance-none border border-[#333] bg-white" />
                                        </div>
                                    )}
                                </td>
                            </tr>
                        ))}
                    </tbody>
                </table>
            </div>
            <ScrollV thumb="h-[17px]" className="mr-px" />
        </div>
    );
}

function GreyButton({ children, className }: { children: ReactNode; className?: string }) {
    return (
        <button type="button" disabled className={clsx('h-6 border border-[#bfbfbf] bg-[#cccccc] text-xs text-[#838383]', GRID_FONT, className)}>
            {children}
        </button>
    );
}

/* ---------- query dialog ---------- */

interface Node {
    level: number;
    text: string;
    state: 'open' | 'closed' | 'leaf';
    selected?: boolean;
}

const chapterTree: Node[] = [
    { level: 0, text: '建筑工程', state: 'open' },
    { level: 1, text: '第一章砌筑工程', state: 'closed' },
    { level: 1, text: '第二章混凝土及钢筋混凝土', state: 'open' },
    { level: 2, text: '一、现场搅拌混凝土', state: 'closed' },
    { level: 2, text: '二、商品混凝土', state: 'closed' },
    { level: 2, text: '三、集中搅拌混凝土', state: 'closed' },
    { level: 2, text: '四、预制混凝土构件成品', state: 'closed' },
    { level: 2, text: '五、混凝土构件接头灌缝', state: 'leaf' },
    { level: 2, text: '六、钢筋及铁件', state: 'open' },
    { level: 3, text: '1.现浇构件圆钢筋', state: 'leaf' },
    { level: 3, text: '2.现浇构件螺纹钢筋', state: 'leaf' },
    { level: 3, text: '3.现浇构件其他钢筋', state: 'leaf' },
    { level: 3, text: '4.桩基础钢筋', state: 'leaf' },
    { level: 3, text: '5.先张法预应力钢筋', state: 'leaf' },
    { level: 3, text: '6.后张法预应力钢筋', state: 'leaf' },
    { level: 3, text: '7.后张法预应力钢丝', state: 'leaf' },
    { level: 3, text: '8.铁件、预埋螺栓', state: 'leaf', selected: true },
    { level: 3, text: '9.钢筋连接', state: 'leaf' },
    { level: 3, text: '10.植筋', state: 'leaf' },
    { level: 1, text: '第三章木结构工程', state: 'closed' },
    { level: 1, text: '第四章金属结构工程', state: 'closed' },
    { level: 1, text: '第五章屋面及防水工程', state: 'closed' },
];

function TreeRow({ node }: { node: Node }) {
    return (
        <li className="flex h-4 whitespace-nowrap">
            {Array.from({ length: node.level }, (_, k) => (
                <span key={k} className={clsx('mr-[5px] w-[14px] shrink-0', k < 2 && 'border-r border-dotted border-[#808080]')} />
            ))}
            {node.state === 'leaf' ? (
                <span className="flex w-[23px] shrink-0">
                    <span className="w-[14px] border-r border-dotted border-[#808080]" />
                    <span className="w-[8px] self-center border-t border-dotted border-[#808080]" />
                </span>
            ) : (
                <span className="flex w-[23px] shrink-0 items-center pl-[7px]">
                    <Chev dir={node.state === 'open' ? 'down' : 'right'} className={node.state === 'open' ? 'text-[#404040]' : 'text-[#a6a6a6]'} />
                    <span className="ml-[3px] size-px bg-[#808080]" />
                </span>
            )}
            <span className={clsx('px-[2px]', node.selected && 'bg-[#cce8ff] pr-1')}>{node.text}</span>
        </li>
    );
}

const quotaResults = [
    ['1', 'A2-518', '铁件', 't', '8111.81', '7316.94'],
    ['2', 'A2-519', '刨光车丝钻眼铁件', 't', '10576.21', '9480.44'],
    ['3', 'A2-520', '预埋螺栓', 't', '10576.21', '9480.92'],
];

function QueryDialog() {
    return (
        <section
            role="dialog"
            aria-label="查询"
            className={clsx('absolute top-[148px] left-[270px] z-10 flex h-[513px] w-[852px] flex-col border border-[#2e8ded] bg-[#f0f0f0] text-xs shadow-[0_3px_16px_rgba(0,0,0,0.5)]', GRID_FONT)}
        >
            <div className="flex h-[30px] shrink-0 items-center bg-white pl-[7px]">
                <AppIcon />
                <h2 className="ml-[5px] flex-1">查询</h2>
                <WindowControls />
            </div>
            <div className="flex h-[27px] shrink-0 items-start">
                <div className="flex h-[21px] flex-1 items-center">
                    {['清单指引', '清单', '定额', '人材机', '补充人材机'].map((t) =>
                        t === '定额' ? (
                            <button key={t} type="button" className="mx-[5px] h-5 w-[42px] border-t-2 border-r border-l-2 border-t-[#707070] border-r-white border-l-[#707070] bg-[#f8f8f8]">{t}</button>
                        ) : (
                            <button key={t} type="button" className={clsx('h-[21px]', t === '清单指引' ? 'pl-[7px]' : 'pl-[10px]', t === '清单' ? 'pr-[17px]' : 'pr-[10px]')}>{t}</button>
                        ),
                    ).flatMap((b, i) => [b, <span key={i} className="h-[21px] w-px bg-[#a0a0a0]" />])}
                </div>
                <GreyButton className="mt-[3px] mr-1 w-[73px]">插入(I)</GreyButton>
                <GreyButton className="mt-[3px] w-[70px]">替换(R)</GreyButton>
            </div>
            <div className="flex min-h-0 flex-1">
                <div className="flex w-[218px] shrink-0 flex-col">
                    <div className="relative">
                        <select aria-label="定额库" className="block h-5 w-[215px] appearance-none overflow-hidden border border-[#adadad] bg-[#e1e1e1] pr-[18px] pl-[2px] text-xs leading-4">
                            <option>湖北省房屋建筑与装饰工程消耗量定额及基价表</option>
                        </select>
                        <svg viewBox="0 0 10 6" className="absolute top-[7px] right-[7px] h-[6px] w-[10px]">
                            <path d="m1 .5 4 4 4-4" fill="none" stroke="#555" />
                        </svg>
                    </div>
                    <div className="mt-[2px] flex h-[20px] items-end">
                        <button type="button" className="h-5 w-[62px] bg-white">章节查询</button>
                        <button type="button" className="h-[18px] w-[56px] border border-b-0 border-[#d9d9d9] leading-4">条件查询</button>
                    </div>
                    <div className="mb-[2px] flex min-h-0 w-[213px] flex-1 flex-col border border-[#dcdcdc] bg-white px-[2px] pt-[3px]">
                        <div className="flex min-h-0 flex-1 flex-col border border-[#828790] pt-px pr-px">
                            <div className="flex min-h-0 flex-1">
                                <ul className="min-w-0 flex-1 overflow-hidden leading-4">
                                    {chapterTree.map((n) => <TreeRow key={n.text} node={n} />)}
                                </ul>
                                <ScrollV thumb="h-[212px]" />
                            </div>
                            <ScrollH thumb="w-[105px]" className="mb-px pr-[17px]" />
                        </div>
                        <div className="-mx-px flex h-[38px] shrink-0 items-center gap-[21px] bg-[#f0f0f0] pl-[12px]">
                            {['标准', '补充', '全部'].map((r) => (
                                <label key={r} className="flex items-center gap-2">
                                    <input
                                        type="radio"
                                        name="scope"
                                        defaultChecked={r === '全部'}
                                        className="size-[11px] appearance-none rounded-full border border-[#8a8a8a] bg-white checked:bg-black checked:shadow-[inset_0_0_0_2px_white]"
                                    />
                                    {r}
                                </label>
                            ))}
                        </div>
                    </div>
                </div>
                <div className="min-w-0 flex-1 border border-[#a0a0a0] bg-white p-px">
                    <table className="table-fixed border-separate border-spacing-0 leading-4">
                        <colgroup>
                            <col className="w-[23px]" />
                            <col className="w-[62px]" />
                            <col className="w-[268px]" />
                            <col className="w-[55px]" />
                            <col className="w-[65px]" />
                            <col className="w-[81px]" />
                        </colgroup>
                        <thead>
                            <tr className="h-[21px]">
                                <th className={HEAD} />
                                <th className={CODE_HEAD}>编码</th>
                                <th className={HEAD}>名称</th>
                                <th className={HEAD}>单位</th>
                                <th className={HEAD}>含税单价</th>
                                <th className={HEAD}>不含税单价</th>
                            </tr>
                        </thead>
                        <tbody>
                            {quotaResults.map((r, i) => (
                                <tr key={r[0]} className="h-[19px]">
                                    <th className={clsx(CELL, 'text-center font-normal', NUM_FONT, i === 0 ? 'bg-[#ffd28a]' : 'bg-[#f0f0f0]')}>{r[0]}</th>
                                    <td className={clsx(CELL, NUM_FONT, 'pl-[2px]', i === 0 && 'bg-[#d9eaf9]')}>{r[1]}</td>
                                    <td className={clsx(CELL, 'pl-[2px]')}>{r[2]}</td>
                                    <td className={clsx(CELL, NUM_FONT, 'pl-[3px]')}>{r[3]}</td>
                                    <td className={clsx(CELL, NUM_FONT, 'pr-[3px] text-right')}>{r[4]}</td>
                                    <td className={clsx(CELL, NUM_FONT, 'pr-[3px] text-right')}>{r[5]}</td>
                                </tr>
                            ))}
                        </tbody>
                    </table>
                </div>
            </div>
        </section>
    );
}

/* ---------- floating marks ---------- */

function Marks() {
    return (
        <svg className="pointer-events-none absolute inset-0 z-20 h-full w-full" fill="none" stroke="#f00" strokeWidth="7">
            <ellipse cx="577" cy="280" rx="106" ry="32" />
            <ellipse cx="398" cy="513" rx="73" ry="21" />
        </svg>
    );
}

function SpeedBall() {
    return (
        <div className="absolute -top-[30px] right-[170px] z-10 flex size-12 items-end justify-center rounded-full border-[3px] border-[#dedede] bg-linear-to-b from-[#38b14c] to-[#4fd267] pb-[2px] text-xs leading-4 font-bold text-white shadow-[0_3px_8px_rgba(0,0,0,0.3)]">
            73
        </div>
    );
}

function ImeBar() {
    return (
        <div className="absolute right-0 bottom-[66px] z-10 flex items-center">
            <Sogou className="relative z-10 -mr-[2px] size-7" />
            <div className="flex h-6 w-[180px] items-center justify-between border border-[#b9d3e8] bg-white pr-1 pl-2 text-[#1d73cf]">
                <span className={clsx('text-[15px] leading-5 font-bold', GRID_FONT)}>中</span>
                <svg viewBox="0 0 12 14" className="h-[14px] w-3" fill="none" stroke="currentColor">
                    <circle cx="2.500" cy="5" r="1.700" strokeWidth="1.400" />
                    <path d="M9 7.500c2 0 2 3-1 5" strokeWidth="2.200" />
                </svg>
                <Smile className="size-[17px]" strokeWidth={2.5} />
                <Mic className="size-[17px] fill-current" strokeWidth={2.5} />
                <Keyboard className="size-[18px]" strokeWidth={2.5} />
                <span className="relative flex w-4">
                    <FaUser className="size-[14px] text-[#b3bfd3]" />
                    <span className="absolute -right-px -bottom-[2px] bg-white text-[8px] leading-2 font-bold text-[#8ea0bd]">22</span>
                </span>
                <Shirt className="size-4 fill-current" />
                <Wrench className="size-4 fill-current" />
            </div>
        </div>
    );
}

/* ---------- bottom bars ---------- */

function StatusBar() {
    const seg = 'h-[18px] shrink-0 truncate border border-[#d5d5d5] border-t-[#c8c8c8] bg-linear-to-b from-[#fcfcfc] to-[#f3f3f3] pl-px leading-4';
    return (
        <footer className={clsx('flex h-5 shrink-0 items-center gap-[2px] bg-[#fbfbfb] text-xs', GRID_FONT)}>
            <span className={clsx(seg, 'w-[332px]')}>清单库：工程量清单项目计量规范(2013-湖北)</span>
            <span className={clsx(seg, 'w-[344px]')}>定额库：湖北省房屋建筑与装饰工程消耗量定额及基价表(2013)</span>
            <span className={clsx(seg, 'w-[269px]')}>定额专业：建筑工程</span>
            <span className={clsx(seg, 'w-[208px]')}>当前分部：整个项目</span>
            <span className={clsx(seg, 'flex-1')}>计税模式：增值税(一般计税方法)</span>
        </footer>
    );
}

function TaskItem({ label, children, running, active }: { label: string; children: ReactNode; running?: boolean; active?: boolean }) {
    return (
        <button
            type="button"
            aria-label={label}
            className={clsx('flex h-full w-[49px] shrink-0 flex-col items-center', active && 'bg-[#333a3f]')}
        >
            <span className="flex flex-1 items-center">{children}</span>
            <span className={clsx('h-[2px]', active ? 'w-full' : 'w-10', running && 'bg-[#76b9ed]')} />
        </button>
    );
}

function Taskbar() {
    return (
        <footer className="flex h-10 shrink-0 items-center bg-[#000a0f] text-white">
            <button type="button" aria-label="开始" className="flex h-full w-12 items-center justify-center bg-black">
                <svg viewBox="0 0 16 16" className="size-4" fill="#fff">
                    <path d="M0 2.300 6.800 1.300v6.300H0zM7.600 1.200 16 0v7.600H7.600zM0 8.400h6.800v6.300L0 13.700zM7.600 8.400H16V16l-8.400-1.200z" />
                </svg>
            </button>
            <label className="flex h-full w-[344px] items-center bg-[#333] pl-[9px]">
                <span className="size-[21px] shrink-0 rounded-full border-[3px] border-white" />
                <input
                    aria-label="搜索"
                    placeholder="在这里输入你要搜索的内容"
                    className={clsx('ml-[6px] min-w-0 flex-1 bg-transparent text-sm placeholder:text-[#9a9a9a]', GRID_FONT)}
                />
                <svg viewBox="0 0 12 18" className="mr-[14px] h-[18px] w-3" fill="none" stroke="#a5a5a5">
                    <rect x="3.500" y="0.500" width="5" height="11" rx="1" />
                    <path d="M1 9v5h10V9M6 14v3M3 17.500h6" />
                </svg>
            </label>
            <div className="flex h-full">
                <TaskItem label="任务视图">
                    <svg viewBox="0 0 20 14" className="h-[14px] w-5" fill="none" stroke="#fff">
                        <path d="M4.500.5h11v13h-11zM3 2.500H.5v9H3M17 2.500h2.500v9H17" />
                    </svg>
                </TaskItem>
                <TaskItem label="风车">
                    <svg viewBox="0 0 22 22" className="size-[22px]" fill="#ececec">
                        {[0, 90, 180, 270].map((a) => (
                            <path key={a} d="M10.500 10.500H6C2 10.500.5 8 .5 5.500.5 2 3 .5 6 .5c4 0 6.500 3 4.500 10z" transform={`rotate(${a} 11 11)`} />
                        ))}
                    </svg>
                </TaskItem>
                <TaskItem label="浏览器"><FaInternetExplorer className="ml-1 size-[21px] text-[#efefef]" /></TaskItem>
                <TaskItem label="广联达">
                    <svg viewBox="0 0 24 24" className="ml-1 size-[22px]" fill="none" stroke="#d5d5d5" strokeWidth="1.300">
                        <path d="M22 3c-1 3-3 4-5.500 3.500C11 4 7 7.500 6.500 12c0 4.500 3.500 7 7 6.500 4-.5 5-4 4-6.500-1.500-2.500-6-2-5.500 1 .2 1.500 2 1.500 2.500.5" />
                        <path d="M22 3c-2 .8-4 .6-6.500-.2C8 1 3.500 6.500 3 12c0 6 4 9.500 8.500 9.500 5.500 0 9.500-4 9-9-.5-4-4-5.500-7.500-4.500-3 1-4 4-2.500 6.500" />
                    </svg>
                </TaskItem>
                <TaskItem label="Edge"><FaEdgeLegacy className="ml-2 size-[21px] text-[#0b7ad8]" /></TaskItem>
                <TaskItem label="Internet Explorer">
                    <svg viewBox="0 0 24 24" className="ml-2 size-6">
                        <path d="M22 14.500H10c.4 3.500 5.500 4 7 1h4.500C19 23.500 5 23 5 13S22.500 3 22 14.500zM10 11h7.500c-.4-3.500-7-3.500-7.500 0z" fill="#52b4ea" />
                        <path d="M22 6c1-3.500-1.500-5.500-6-3.500C9 5.500 2.500 14 1.500 19.500c-.5 3.500 3 3.500 6 1" fill="none" stroke="#f5c32c" strokeWidth="2" />
                    </svg>
                </TaskItem>
                <TaskItem label="文件资源管理器">
                    <svg viewBox="0 0 22 20" className="ml-2 h-[19px] w-[21px]">
                        <path d="M0 1h8l1.500 2H22v16H0z" fill="#fce08c" />
                        <path d="M0 1h7v2H0z" fill="#eea92b" />
                        <path d="M4 11h14v8h-4v-4H8v4H4z" fill="#3aa9e0" />
                    </svg>
                </TaskItem>
                <TaskItem label="360浏览器" running>
                    <span className="ml-1 flex size-[22px] items-center justify-center rounded-full border border-white bg-[#58c22a]">
                        <svg viewBox="0 0 20 20" className="size-5 overflow-visible" fill="none" stroke="#fff">
                            <path d="M4.500 10.500h11c0-7-11-7-11 0s9 6.500 10.500 3" strokeWidth="2.600" />
                            <path d="M19 0C12 1 3 10 1 20" stroke="#2f8f14" strokeWidth="1.500" />
                        </svg>
                    </span>
                </TaskItem>
                <TaskItem label="广联达G+" running>
                    <svg viewBox="0 0 24 24" className="ml-1 size-6">
                        <path d="M23.500 2c-.5 4-3 6-6.500 5.500 4 1 6 4 5 8-1 5-5 8-10.500 8C5 23.500.5 19 .5 12.500.5 5 6.500-.5 13 .5c4 1 7 2.500 10.500 1.500z" fill="#1e9cf0" />
                        <path d="M16 6C11 4 6.500 7.500 6.500 12.500c0 4 4 6.500 7.500 5 2.500-1.200 2.500-5-.5-4.500-1.500.3-1.500 1.500-1 2" fill="none" stroke="#00202f" strokeWidth="2" />
                    </svg>
                </TaskItem>
                <TaskItem label="云同步" running>
                    <svg viewBox="0 0 24 24" className="size-6">
                        <rect width="24" height="24" rx="4" fill="#0d92f4" />
                        <path d="M8.500 17.500c0 3 4 3 4 0V7.500c0-3 3.500-3 3.500 0M8 9c-5 0-5 5.500 0 5.500 2 0 3-1.500 4.500-1.500H17c2.500 0 2.500-3.500.5-3.500" fill="none" stroke="#fff" strokeWidth="1.900" />
                    </svg>
                </TaskItem>
                <TaskItem label="计价软件" running active><AppIcon className="size-6" /></TaskItem>
            </div>
            <span className="ml-[18px] text-xs">链接</span>
            <span className="ml-[19px] text-center text-xs leading-4">18%<br />CPU使用</span>
            <div className="ml-auto flex items-center gap-2">
                <ChevronUp className="size-[15px]" />
                <svg viewBox="0 0 18 12" className="h-3 w-[18px]" fill="none" stroke="#fff">
                    <path d="M1 1v2.500h4V1M3 4v5h3M5.500 3.500h10v7h-10zM16.500 5.500v3" />
                    <path d="M7 5h7v4H7z" fill="#fff" />
                </svg>
                <Wifi className="size-[17px] rotate-[-45deg] text-[#d0d0d0]" />
                <Volume2 className="size-[17px]" strokeWidth={1.5} />
                <svg viewBox="0 0 22 13" className="h-[13px] w-[22px]" fill="none" stroke="#fff">
                    <path d="M.5.5h21v12H.5z" />
                    <path d="M3 3.500h16M3 6.500h16" strokeDasharray="1.500 1" />
                    <path d="M5 9.500h12" />
                </svg>
                <span className="text-[13px] leading-4">中</span>
                <Sogou className="ml-[5px] size-4" />
            </div>
            <time className="ml-5 text-center text-xs leading-[18px]">17:14<br />2018/3/5</time>
            <button type="button" aria-label="通知" className="ml-[22px]">
                <svg viewBox="0 0 17 16" className="h-4 w-[17px]" fill="none" stroke="#fff">
                    <path d="M.5.5h16v12H11l-2.500 3-2.500-3H.5z" />
                </svg>
            </button>
            <span className="mr-1 ml-5 h-full w-px bg-[#555]" />
        </footer>
    );
}

export default function App() {
    return (
        <div className={clsx('relative flex h-screen w-full flex-col overflow-hidden bg-[#f0f0f0] text-xs text-black', UI_FONT)}>
            <TitleBar />
            <MenuBar />
            <MainToolbar />
            <main className="flex min-h-0 flex-1">
                <SideTabs />
                <SectionPanel />
                <div className="flex w-[7px] shrink-0 items-center">
                    <span className="h-[100px] w-[6px] border border-[#8a8a8a]" />
                </div>
                <div className="flex min-w-0 flex-1 flex-col pr-px pb-[2px]">
                    <EditToolbar />
                    <QuotaGrid />
                    <div className="flex h-[30px] shrink-0 items-center pt-[6px] pl-[2px]">
                        <button type="button" className={clsx('h-5 w-[71px] border-t-2 border-r border-l-2 border-t-[#707070] border-r-white border-l-[#707070] bg-[#f8f8f8]', GRID_FONT)}>工料机显示</button>
                        <span className="ml-[5px] h-5 w-px bg-[#a0a0a0]" />
                    </div>
                    <div className="flex h-[115px] shrink-0">
                        <MaterialGrid />
                        <div className="ml-[10px] grid w-[104px] shrink-0 grid-cols-2 content-start gap-x-[6px] gap-y-1 pt-[5px]">
                            <GreyButton>插入</GreyButton>
                            <GreyButton>添加</GreyButton>
                            <GreyButton>删除</GreyButton>
                            <GreyButton>查询</GreyButton>
                            <GreyButton className="col-span-2">补充</GreyButton>
                            <GreyButton className="col-span-2">{null}</GreyButton>
                        </div>
                    </div>
                </div>
            </main>
            <StatusBar />
            <Taskbar />
            <QueryDialog />
            <SpeedBall />
            <ImeBar />
            <Marks />
        </div>
    );
}
